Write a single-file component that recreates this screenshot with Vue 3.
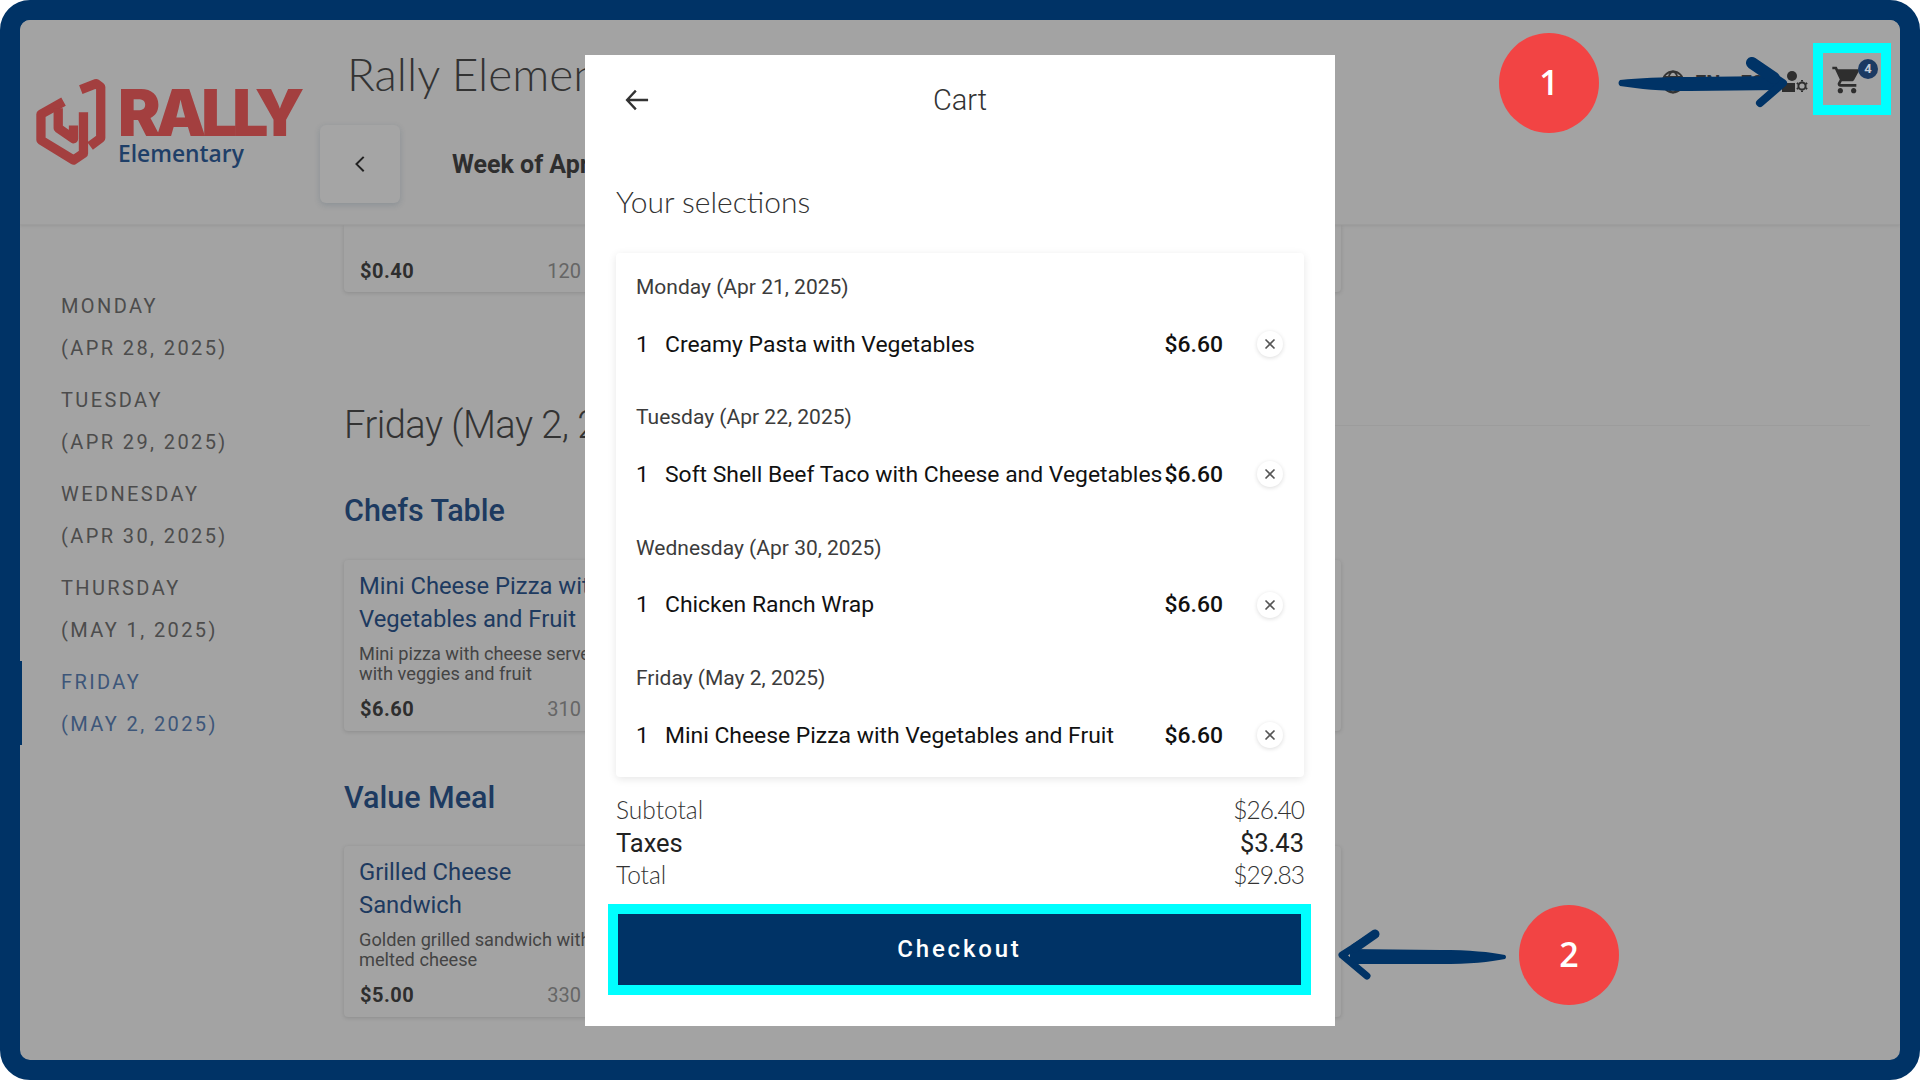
<template>
  <div class="frame">
    <header class="page-header">
      <div class="logo">
        <svg class="logo-mark" viewBox="45 55 215 265" width="72" height="88">
          <g fill="none" stroke="#a33f3f" stroke-width="28" stroke-linejoin="round">
            <path d="M130 126 L62 164 V242 L160 302 L190 282 V158" />
            <path d="M114 146 V206 L160 238 V198" />
            <path d="M182 90 L228 72 L242 82 V236 L210 260" />
          </g>
        </svg>
        <div class="logo-text">
          <div class="logo-rally">RALLY</div>
          <div class="logo-sub">Elementary</div>
        </div>
      </div>

      <div class="head-mid">
        <h1 class="school">Rally Elementary</h1>
        <div class="week-row">
          <button class="prev">
            <svg width="24" height="24" viewBox="0 0 24 24" fill="none" stroke="#222" stroke-width="2">
              <path d="M15.7 4.9 L8.5 12.1 L15.7 19.3" />
            </svg>
          </button>
          <span class="week-label">Week of Apr 28, 2025</span>
        </div>
      </div>

      <div class="head-tools">
        <svg class="globe" width="24" height="24" viewBox="0 0 24 24" fill="none" stroke="#333" stroke-width="1.8">
          <circle cx="12" cy="12" r="10.5" />
          <ellipse cx="12" cy="12" rx="5" ry="10.5" />
          <path d="M1.5 12 H22.5 M3 7 H21 M3 17 H21" />
        </svg>
        <span class="lang">EN</span>
        <span class="lang lang-alt">ES</span>
        <svg class="person" width="27" height="24" viewBox="0 0 27 24" fill="#2e2e2e">
          <circle cx="10" cy="6" r="5" />
          <path d="M0 22 V18 L4 13 H13 L13 22 Z" />
          <g fill="none" stroke="#2e2e2e" stroke-width="2">
            <circle cx="20" cy="16" r="3.6" />
            <path d="M20 10 V11.5 M20 20.5 V22 M14.8 13 L16.2 13.8 M23.8 18.2 L25.2 19 M14.8 19 L16.2 18.2 M23.8 13.8 L25.2 13" />
          </g>
        </svg>
        <div class="cart-btn">
          <svg width="32" height="32" viewBox="0 0 24 24" fill="#2e2e2e">
            <path d="M7 18c-1.1 0-1.99.9-1.99 2S5.9 22 7 22s2-.9 2-2-.9-2-2-2zM1 2v2h2l3.6 7.59-1.35 2.45c-.16.28-.25.61-.25.96 0 1.1.9 2 2 2h12v-2H7.42c-.14 0-.25-.11-.25-.25l.03-.12.9-1.63h7.45c.75 0 1.41-.41 1.75-1.03l3.58-6.47c.08-.14.12-.31.12-.48 0-.55-.45-1-1-1H5.21l-.94-2H1zm16 16c-1.1 0-1.99.9-1.99 2s.89 2 1.99 2 2-.9 2-2-.9-2-2-2z" />
          </svg>
          <span class="cart-badge">4</span>
        </div>
      </div>
    </header>

    <div class="page-body">
      <nav class="days">
        <div v-for="d in days" :key="d.name" class="day" :class="{ active: d.active }">
          <div>{{ d.name }}</div>
          <div>{{ d.date }}</div>
        </div>
      </nav>

      <main class="menu">
        <div class="menu-grid">
          <article class="card card-cut">
            <div class="price-row"><b>$0.40</b><span>120</span></div>
          </article>
          <article class="card card-cut"></article>
          <article class="card card-cut"></article>
        </div>

        <div class="day-head">
          <h2>Friday (May 2, 2025)</h2>
          <div class="rule"></div>
        </div>

        <h3 class="section">Chefs Table</h3>
        <div class="menu-grid">
          <article class="card">
            <div class="dish">Mini Cheese Pizza with Vegetables and Fruit</div>
            <p class="desc">Mini pizza with cheese served<br />with veggies and fruit</p>
            <div class="price-row"><b>$6.60</b><span>310</span></div>
          </article>
          <article class="card"></article>
          <article class="card"></article>
        </div>

        <h3 class="section second">Value Meal</h3>
        <div class="menu-grid">
          <article class="card">
            <div class="dish">Grilled Cheese<br />Sandwich</div>
            <p class="desc">Golden grilled sandwich with<br />melted cheese</p>
            <div class="price-row"><b>$5.00</b><span>330</span></div>
          </article>
          <article class="card"></article>
          <article class="card"></article>
        </div>
      </main>
    </div>

    <section class="modal">
      <div class="modal-top">
        <svg width="28" height="28" viewBox="0 0 24 24" fill="none" stroke="#333" stroke-width="2">
          <path d="M21.5 12 H3.5 M11 4 L3.5 12 L11 20" />
        </svg>
        <span class="modal-title">Cart</span>
      </div>

      <h2 class="selections">Your selections</h2>

      <div class="cart-card">
        <div v-for="line in lines" :key="line.date" class="cart-group">
          <div class="cart-date">{{ line.date }}</div>
          <div class="cart-item">
            <span class="qty">1</span>
            <span class="item-name">{{ line.name }}</span>
            <span class="item-price">$6.60</span>
            <span class="remove">
              <svg width="12" height="12" viewBox="0 0 12 12" stroke="#555" stroke-width="1.6">
                <path d="M1.5 1.5 L10.5 10.5 M10.5 1.5 L1.5 10.5" />
              </svg>
            </span>
          </div>
        </div>
      </div>

      <div class="totals">
        <div class="total-row"><span>Subtotal</span><span>$26.40</span></div>
        <div class="total-row taxes"><span>Taxes</span><span>$3.43</span></div>
        <div class="total-row"><span>Total</span><span>$29.83</span></div>
      </div>

      <button class="checkout">Checkout</button>
    </section>

    <!-- tutorial annotations on top of the screenshot -->
    <div class="step step-one">1</div>
    <div class="step step-two">2</div>
    <div class="cart-mark"></div>

    <svg class="arrow arrow-one" width="180" height="60" viewBox="1615 55 180 60">
      <path d="M1620 80 C1640 78 1660 77 1690 77 L1778 76 L1778 90 L1690 91 C1660 91 1640 89 1620 86 Q1617 83 1620 80 Z" fill="#003366" />
      <path d="M1752 63 L1783 83 L1760 103" fill="none" stroke="#003366" stroke-width="8" stroke-linecap="round" stroke-linejoin="round" />
      <path d="M1752 63 L1774 78" fill="none" stroke="#003366" stroke-width="12" stroke-linecap="round" />
    </svg>

    <svg class="arrow arrow-two" width="180" height="60" viewBox="1332 925 180 60">
      <path d="M1505 955 C1490 952 1470 950 1440 950 L1350 949 L1350 964 L1440 964 C1470 964 1490 962 1505 959 Q1507 957 1505 955 Z" fill="#003366" />
      <path d="M1375 934 L1342 955 L1367 976" fill="none" stroke="#003366" stroke-width="7" stroke-linecap="round" stroke-linejoin="round" />
      <path d="M1375 934 L1355 948" fill="none" stroke="#003366" stroke-width="9" stroke-linecap="round" />
    </svg>
  </div>
</template>

<script setup>
const days = [
  { name: "MONDAY", date: "(APR 28, 2025)" },
  { name: "TUESDAY", date: "(APR 29, 2025)" },
  { name: "WEDNESDAY", date: "(APR 30, 2025)" },
  { name: "THURSDAY", date: "(MAY 1, 2025)" },
  { name: "FRIDAY", date: "(MAY 2, 2025)", active: true },
];

const lines = [
  { date: "Monday (Apr 21, 2025)", name: "Creamy Pasta with Vegetables" },
  { date: "Tuesday (Apr 22, 2025)", name: "Soft Shell Beef Taco with Cheese and Vegetables" },
  { date: "Wednesday (Apr 30, 2025)", name: "Chicken Ranch Wrap" },
  { date: "Friday (May 2, 2025)", name: "Mini Cheese Pizza with Vegetables and Fruit" },
];
</script>

<style>
html,
body {
  margin: 0;
  background: #fff;
}
</style>

<style scoped>
.frame {
  position: relative;
  box-sizing: border-box;
  width: 1920px;
  height: 1080px;
  border: 20px solid #003366;
  border-radius: 30px;
  background: #a3a3a3;
  overflow: hidden;
  font-family: Roboto, "Liberation Sans", sans-serif;
  color: #2e2e2e;
}

.page-header {
  display: flex;
  height: 204px;
  border-bottom: 1px solid #9d9d9d;
  box-shadow: 0 1px 3px rgba(0, 0, 0, 0.08);
  position: relative;
  z-index: 1;
  background: #a3a3a3;
}

.logo {
  display: flex;
  align-items: center;
  gap: 11px;
  width: 300px;
  padding-left: 15px;
  box-sizing: border-box;
}

.logo-text {
  margin-top: 8px;
}

.logo-rally {
  font-family: Inter, sans-serif;
  font-weight: 900;
  font-size: 64px;
  line-height: 56px;
  letter-spacing: -5.2px;
  color: #a33f3f;
}

.logo-sub {
  font-family: "Open Sans", sans-serif;
  font-weight: 600;
  font-size: 22.8px;
  line-height: 26px;
  color: #1f3f68;
}

.head-mid {
  flex: 1;
  min-width: 0;
  padding-top: 29px;
}

.school {
  margin: 0 0 26px 27px;
  font-family: Lato, sans-serif;
  font-weight: 300;
  font-size: 46px;
  line-height: 50px;
  color: #333;
}

.week-row {
  display: flex;
  align-items: center;
}

.prev {
  display: flex;
  align-items: center;
  justify-content: center;
  width: 80px;
  height: 78px;
  padding: 0;
  border: none;
  border-radius: 6px;
  background: #a5a5a5;
  box-shadow: 0 2px 6px rgba(30, 60, 90, 0.18);
}

.week-label {
  margin-left: 52px;
  font-weight: 700;
  font-size: 25px;
  color: #2e2e2e;
}

.head-tools {
  display: flex;
  align-items: center;
  align-self: flex-start;
  margin-top: 44px;
  padding-right: 37px;
}

.globe {
  margin-top: 4px;
}

.lang {
  margin: 6px 0 0 10px;
  font-weight: 700;
  font-size: 20px;
  color: #333;
}

.lang-alt {
  margin-left: 20px;
}

.person {
  margin: 4px 0 0 18px;
}

.cart-btn {
  position: relative;
  display: flex;
  margin-left: 22px;
}

.cart-badge {
  position: absolute;
  top: -5px;
  right: -15px;
  width: 20px;
  height: 20px;
  border-radius: 50%;
  background: #1b3a63;
  color: #c4ccd6;
  font-size: 13px;
  font-weight: 700;
  line-height: 20px;
  text-align: center;
}

.page-body {
  display: flex;
}

.days {
  box-sizing: border-box;
  flex: none;
  width: 324px;
  padding: 60px 0 0 41px;
}

.day {
  position: relative;
  margin-bottom: 10px;
  font-size: 20px;
  line-height: 42px;
  letter-spacing: 2.4px;
  color: #4c4c4c;
}

.day.active {
  color: #3d5679;
}

.day.active::before {
  content: "";
  position: absolute;
  left: -41px;
  top: 0;
  bottom: 0;
  width: 2px;
  background: #003366;
}

.menu {
  flex: 1;
  min-width: 0;
}

.menu-grid {
  display: grid;
  grid-template-columns: repeat(3, 1fr);
  gap: 5px;
  width: 997px;
}

.card {
  box-sizing: border-box;
  height: 171px;
  padding: 10px 15px;
  border-radius: 4px;
  background: #a3a3a3;
  box-shadow: 0 1px 4px rgba(0, 0, 0, 0.14);
}

.card-cut {
  height: 67px;
  padding-top: 34px;
  border-radius: 0 0 4px 4px;
}

.day-head {
  display: flex;
  align-items: center;
  gap: 20px;
  margin-top: 108px;
}

.day-head h2 {
  margin: 0;
  flex: none;
  font-family: Roboto, sans-serif;
  font-weight: 300;
  font-size: 38px;
  line-height: 50px;
  letter-spacing: -0.5px;
  color: #333;
}

.rule {
  flex: 1;
  height: 1px;
  margin-right: 30px;
  background: #9c9c9c;
}

.section {
  margin: 41px 0 29px;
  font-weight: 500;
  font-size: 30.5px;
  line-height: 40px;
  color: #1d3a60;
}

.section.second {
  margin: 47px 0 28px;
}

.dish {
  font-weight: 400;
  font-size: 23.8px;
  line-height: 33px;
  color: #1d3a60;
}

.desc {
  margin: 8px 0 13px;
  font-size: 18.2px;
  line-height: 20px;
  color: #444;
}

.price-row {
  display: flex;
  justify-content: space-between;
  width: 221px;
  padding-left: 1px;
  font-size: 20px;
  line-height: 24px;
  letter-spacing: 0.5px;
  color: #666;
}

.price-row span {
  letter-spacing: 0;
}

.price-row b {
  color: #2e2e2e;
}

.modal {
  position: absolute;
  left: 565px;
  top: 35px;
  box-sizing: border-box;
  width: 750px;
  height: 971px;
  padding: 22px 31px 0;
  background: #fff;
  z-index: 2;
}

.modal-top {
  position: relative;
  display: flex;
  align-items: center;
  justify-content: center;
  height: 44px;
  padding-top: 2px;
  box-sizing: border-box;
}

.modal-top svg {
  position: absolute;
  left: 7px;
  top: 9px;
}

.modal-title {
  font-size: 29px;
  font-weight: 300;
  color: #333;
}

.selections {
  margin: 60px 0 32px;
  font-family: Lato, sans-serif;
  font-weight: 300;
  font-size: 30px;
  line-height: 40px;
  color: #333;
}

.cart-card {
  padding: 19px 20px 22px;
  border-radius: 4px;
  box-shadow: 0 2px 8px rgba(0, 0, 0, 0.1);
}

.cart-group + .cart-group {
  margin-top: 38.4px;
}

.cart-date {
  font-size: 21px;
  line-height: 30px;
  color: #3c3c3c;
}

.cart-item {
  display: grid;
  grid-template-columns: 29px 1fr auto 61px;
  align-items: center;
  height: 40px;
  margin-top: 22px;
  font-size: 22.9px;
  color: #111;
}

.item-name {
  white-space: nowrap;
}

.item-price {
  font-weight: 500;
}

.remove {
  display: flex;
  align-items: center;
  justify-content: center;
  justify-self: end;
  width: 26px;
  height: 26px;
  margin-right: 1px;
  border-radius: 50%;
  box-shadow: 0 1px 4px rgba(0, 0, 0, 0.14);
}

.totals {
  margin-top: 17px;
}

.total-row {
  display: flex;
  justify-content: space-between;
  font-family: Lato, sans-serif;
  font-weight: 300;
  font-size: 24.5px;
  line-height: 32.5px;
  color: #333;
}

.total-row span:last-child {
  letter-spacing: -1px;
}

.total-row.taxes {
  font-family: Roboto, sans-serif;
  font-weight: 400;
  font-size: 25.5px;
  color: #222;
}

.total-row.taxes span:last-child {
  letter-spacing: 0;
}

.checkout {
  display: block;
  box-sizing: border-box;
  width: 683px;
  height: 71px;
  margin: 22px 0 0 2px;
  padding: 0;
  border: none;
  outline: 10px solid #00ffff;
  background: #003366;
  color: #fff;
  font-family: Roboto, sans-serif;
  font-weight: 500;
  font-size: 24px;
  letter-spacing: 2.8px;
}

.step {
  position: absolute;
  z-index: 3;
  width: 100px;
  height: 100px;
  border-radius: 50%;
  background: #f24444;
  color: #fff;
  font-family: "Open Sans", sans-serif;
  font-weight: 600;
  font-size: 34px;
  line-height: 98px;
  text-align: center;
}

.step-one {
  left: 1479px;
  top: 13px;
}

.step-two {
  left: 1499px;
  top: 885px;
}

.cart-mark {
  position: absolute;
  z-index: 3;
  left: 1793px;
  top: 23px;
  box-sizing: border-box;
  width: 78px;
  height: 72px;
  border: 10px solid #00ffff;
}

.arrow {
  position: absolute;
  z-index: 3;
}

.arrow-one {
  left: 1595px;
  top: 35px;
}

.arrow-two {
  left: 1312px;
  top: 905px;
}
</style>
